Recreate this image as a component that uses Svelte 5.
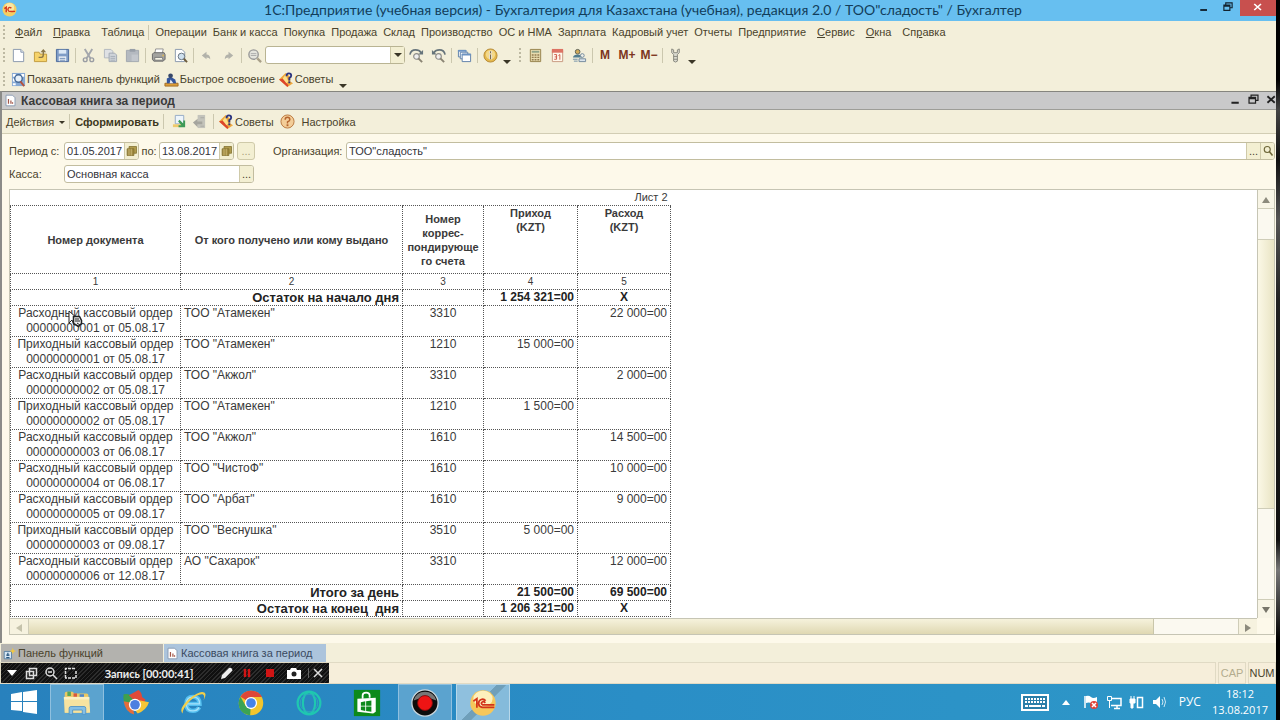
<script>
  const menu = [
    { key: 'Ф', rest: 'айл', wide: true },
    { key: 'П', rest: 'равка', wide: true },
    { rest: 'Таблица', wide: true, sep: true },
    { rest: 'Операции' },
    { rest: 'Банк и касса' },
    { rest: 'Покупка' },
    { rest: 'Продажа' },
    { rest: 'Склад' },
    { rest: 'Производство' },
    { rest: 'ОС и НМА' },
    { rest: 'Зарплата' },
    { rest: 'Кадровый учет' },
    { rest: 'Отчеты' },
    { rest: 'Предприятие', wide: true },
    { key: 'С', rest: 'ервис', wide: true },
    { key: 'О', rest: 'кна', wide: true },
    { pre: 'Сп', key: 'р', rest: 'авка' }
  ];

  const editTools = ['new', 'open', 'save', '|', 'cut', 'copy', 'paste', '|', 'print', 'preview', '|', 'undo', 'redo', '|', 'find'];
  const viewTools = ['next', 'prev', '|', 'windows', '|', 'info'];
  const calcTools = ['calc', 'calendar', 'users', '|', 'M', 'M+', 'M−', '|', 'wrench'];

  const rows = [
    ['Расходный', '00000000001 от 05.08.17', 'ТОО "Атамекен"', '3310', '', '22 000=00'],
    ['Приходный', '00000000001 от 05.08.17', 'ТОО "Атамекен"', '1210', '15 000=00', ''],
    ['Расходный', '00000000002 от 05.08.17', 'ТОО "Акжол"', '3310', '', '2 000=00'],
    ['Приходный', '00000000002 от 05.08.17', 'ТОО "Атамекен"', '1210', '1 500=00', ''],
    ['Расходный', '00000000003 от 06.08.17', 'ТОО "Акжол"', '1610', '', '14 500=00'],
    ['Расходный', '00000000004 от 06.08.17', 'ТОО "ЧистоФ"', '1610', '', '10 000=00'],
    ['Расходный', '00000000005 от 09.08.17', 'ТОО "Арбат"', '1610', '', '9 000=00'],
    ['Приходный', '00000000003 от 09.08.17', 'ТОО "Веснушка"', '3510', '5 000=00', ''],
    ['Расходный', '00000000006 от 12.08.17', 'АО "Сахарок"', '3310', '', '12 000=00']
  ];

  const apps = [
    { id: 'explorer', label: 'Проводник', active: true },
    { id: 'pinwheel', label: 'Браузер' },
    { id: 'ie', label: 'Internet Explorer' },
    { id: 'chrome', label: 'Chrome' },
    { id: 'opera', label: 'Opera' },
    { id: 'store', label: 'Магазин' },
    { id: 'record', label: 'Запись', active: true },
    { id: 'onec', label: '1С:Предприятие', active: true, front: true }
  ];

  let dateFrom = $state('01.05.2017');
  let dateTo = $state('13.08.2017');
  let organization = $state('ТОО"сладость"');
  let cashbox = $state('Основная касса');
  let query = $state('');
</script>

{#snippet icon(name)}
  <svg class="icon" viewBox="0 0 16 16" aria-hidden="true">
    {#if name === 'new'}
      <path d="M2.5 1.5h8l3 3v10h-11z" fill="#fff" stroke="#8796ac" />
      <path d="M10.500 1.500v3h3" fill="#dfe6ef" stroke="#8796ac" />
    {:else if name === 'open'}
      <path d="M1.500 14.500v-10h5l1 2h7v8z" fill="#f6d36a" stroke="#c09a3c" />
      <path d="M6 10h3q2 0 2-3V4" fill="none" stroke="#8a7748" stroke-width="1.500" />
      <path d="M8 4.500 11 1l3 3.500z" fill="#8a7748" />
    {:else if name === 'save'}
      <path d="M1.500 1.500h13v13h-13z" fill="#7f9cc6" stroke="#4a6a9c" />
      <path d="M4 2h8v4H4z" fill="#dce8f6" />
      <path d="M4 9h8v5H4z" fill="#f3f6fa" />
      <path d="M5 11h6M5 13h6" stroke="#6484b0" />
    {:else if name === 'cut'}
      <path d="M4 1l6 10M12 1L6 11" stroke="#a4a7ac" stroke-width="2" />
      <circle cx="4.500" cy="12.500" r="2" fill="none" stroke="#9a9da3" stroke-width="1.500" />
      <circle cx="11.500" cy="12.500" r="2" fill="none" stroke="#9a9da3" stroke-width="1.500" />
    {:else if name === 'copy'}
      <path d="M1.500 1.500h7l2 2v7h-9z" fill="#dfe1e4" stroke="#b0b6be" />
      <path d="M6.500 5.500h6l2 2v7h-8z" fill="#cfd3d9" stroke="#a0a8b2" />
      <path d="M8 9h5M8 11h5M8 13h5" stroke="#a5adb8" />
    {:else if name === 'paste'}
      <path d="M1.500 2.500h13v12h-13z" fill="#b4b9c0" stroke="#a0a6ae" />
      <path d="M5 1h6v3H5z" fill="#989fa8" />
      <path d="M7 7h7v7H7z" fill="#c3c7cd" />
    {:else if name === 'print'}
      <path d="M5 1h8l-1 5H4z" fill="#fff" stroke="#8f8f8f" />
      <path d="M1.500 6.500 3 5h11l1 2v5l-2 2H3l-1.500-2z" fill="#a3a3a0" stroke="#666" />
      <path d="M4 10h8l1 3H4z" fill="#f6f4e6" stroke="#777" />
      <circle cx="13" cy="8" r="1" fill="#d9b455" />
    {:else if name === 'preview'}
      <path d="M2.500 1.500h7l3 3v10h-10z" fill="#fff" stroke="#8796ac" />
      <circle cx="9" cy="9" r="3.500" fill="#cfe0ee" stroke="#66727f" />
      <path d="M11.500 11.500 15 15" stroke="#6b5a3c" stroke-width="2" />
    {:else if name === 'undo'}
      <path d="M3 8l5-4v3q4 0 4 5-1-2-4-2v2z" fill="#b2b2aa" />
    {:else if name === 'redo'}
      <path d="M13 8L8 4v3q-4 0-4 5 1-2 4-2v2z" fill="#b2b2aa" />
    {:else if name === 'find'}
      <circle cx="7" cy="7" r="5" fill="#e4e4dd" stroke="#999" stroke-width="1.500" />
      <path d="M4 6h6M4 8h6" stroke="#aaa" />
      <path d="M11 11l4 4" stroke="#a9a089" stroke-width="2.500" />
    {:else if name === 'next' || name === 'prev'}
      <g transform={name === 'prev' ? 'matrix(-1 0 0 1 16 0)' : undefined}>
        <path d="M1 7q1-5 6-5 4 0 6 3" fill="none" stroke="#66747b" stroke-width="1.800" />
        <path d="M15 2v5h-5z" fill="#66747b" />
      </g>
      <circle cx="8" cy="9" r="3" fill="#eee" stroke="#8c8c88" stroke-width="1.200" />
      <path d="M10 11l4 4" stroke="#8a8474" stroke-width="2" />
    {:else if name === 'windows'}
      <path d="M1.500 2.500h8v7h-8z" fill="#fff" stroke="#5b7ea8" />
      <path d="M3.500 4.500h8v7h-8z" fill="#fff" stroke="#5b7ea8" />
      <path d="M5.500 6.500h9v8h-9z" fill="#fff" stroke="#5b7ea8" />
      <path d="M1 2h9v2H1zM5 6h10v2H5z" fill="#6c93c2" />
    {:else if name === 'info'}
      <circle cx="8" cy="8" r="7" fill="#e5b94d" stroke="#b58a35" />
      <circle cx="8" cy="7" r="5" fill="#f3d98c" />
      <path d="M8 3.500v2M8 7v5" stroke="#fff" stroke-width="3" />
      <path d="M8 3.500v2M8 7v5" stroke="#7c6a4a" stroke-width="1.500" />
    {:else if name === 'calc'}
      <path d="M2.500 1.500h11v13h-11z" fill="#e8dcae" stroke="#94804a" />
      <path d="M4 3h8v2H4z" fill="#8fa387" />
      <path d="M4 7.500h8M4 10h8M4 12.500h8" stroke="#927c50" stroke-width="1.500" stroke-dasharray="2 1" />
    {:else if name === 'calendar'}
      <path d="M2.500 2.500h11v12h-11z" fill="#fff7ea" stroke="#c6977f" />
      <path d="M2 1h12v4H2z" fill="#dd7263" />
      <path d="M4.500 7h2.500v2.500H5M7 9v3H4.500M9 8l1.500-1v5.500" fill="none" stroke="#cc5846" />
    {:else if name === 'users'}
      <circle cx="6" cy="4" r="2.500" fill="#d0aa58" stroke="#5a5f55" />
      <path d="M1 10q1-3 5-3t5 3z" fill="#4f7c8f" />
      <circle cx="11" cy="8" r="2" fill="#efefe8" stroke="#71889b" />
      <path d="M7.500 14.500v-3h7v3z" fill="#dbe4ec" stroke="#71889b" />
      <path d="M1 12h5M2 14h4" stroke="#6f8fa8" />
    {:else if name === 'wrench'}
      <path d="M4 1v4l2 2v7q2 2 4 0V7l2-2V1l-2 1v3H6V2z" fill="#dcdcd2" stroke="#85857c" />
      <path d="M6 9h4M6 12h4" stroke="#85857c" />
    {:else if name === 'panel'}
      <path d="M1 1h14v14H1z" fill="#86a9d4" />
      <path d="M2 2h3v3H2zM2 7h3v3H2zM2 12h3v2H2zM11 2h3v3h-3z" fill="#fff" />
      <circle cx="8" cy="7" r="4" fill="#e7f0f8" stroke="#466a98" stroke-width="1.500" />
      <path d="M10 10l4 5" stroke="#b6523c" stroke-width="2" />
    {:else if name === 'learn'}
      <path d="M1 12h14v3H1z" fill="#dd9d36" stroke="#a26d22" />
      <path d="M3 12V7l4-2 5 3 1 4z" fill="#34559c" />
      <circle cx="7" cy="4" r="2.500" fill="#374769" />
      <path d="M7 8l3 4H6z" fill="#e8ecf3" />
    {:else if name === 'tips'}
      <path d="M0 8l7-7 5 4v5l3 2-6 4z" fill="#f0a83c" />
      <path d="M0 8l4-1 6 7-1 2z" fill="#dc452c" />
      <path d="M4 7l3-4 3 7-2 2z" fill="#fbe08a" />
      <path d="M8 4.500Q8 1.500 10.500 1.500T13 4q0 1.500-2 2.500v2.500" fill="none" stroke="#2d357f" stroke-width="2" />
      <path d="M10 10h2v2h-2z" fill="#2d357f" />
    {:else if name === 'sheet'}
      <path d="M2.500 1.500h8l3 3v10h-11z" fill="#fff" stroke="#7f93ad" />
      <path d="M5.500 12V6M8.500 12V8M10.500 12v-2" stroke="#a4584a" stroke-width="1.500" />
    {:else if name === 'load'}
      <path d="M3.500 1.500h9v9h-9z" fill="#eef5fb" stroke="#93aac4" />
      <path d="M1 11h9v3H1z" fill="#efca6b" />
      <path d="M8 6l4 4V7h2v7H7v-2h3L6.500 8z" fill="#3d9a56" />
    {:else if name === 'unload'}
      <path d="M6 1h8v14H6z" fill="#c3c3bb" />
      <path d="M1 9l5-4v3h5v3H6v3z" fill="#a5a59e" />
      <path d="M9 4h4M9 13h4" stroke="#a9a9a2" />
    {:else if name === 'help'}
      <circle cx="8" cy="8" r="7" fill="#f3cd98" stroke="#b9763d" />
      <path d="M5.500 6q0-2.500 2.500-2.500T10.500 6Q10.500 7 8 8.500V10" fill="none" stroke="#b5652f" stroke-width="1.500" />
      <path d="M7 11h2v2H7z" fill="#b5652f" />
    {:else if name === 'onec'}
      <circle cx="8" cy="8" r="7.500" fill="#f5cf63" />
      <circle cx="8" cy="6" r="5" fill="#fae7a4" />
      <path d="M2.500 7 4.500 5.500V11M10 6.500Q8 5 6.800 6.500T7 9.500Q8 10.500 14 10" fill="none" stroke="#d5361c" stroke-width="1.500" />
    {:else if name === 'book'}
      <path d="M4 2h10v9H4z" fill="#b09b4d" stroke="#7f6d2c" />
      <path d="M1.500 5h9v9h-9z" fill="#a08a40" stroke="#7f6d2c" />
      <path d="M4 5v9M7 5v9" stroke="#d3c283" />
    {:else if name === 'lens'}
      <circle cx="7" cy="6" r="4" fill="none" stroke="#6d6638" stroke-width="1.500" />
      <path d="M10 9l4 5" stroke="#6d6638" stroke-width="2" />
    {:else if name === 'funcs'}
      <path d="M1.500 5.500h9v9h-9z" fill="#d6e6f3" stroke="#4b789e" />
      <path d="M6 7v4M4 13h4M4 10h4" stroke="#28567f" stroke-width="1.500" />
      <path d="M12 1l1 3 3 1-3 1-1 3-1-3-3-1 3-1z" fill="#f3c83f" />
    {:else if name === 'restore'}
      <path d="M5 5V2.500h8.500V9H11M2.500 5.500h8v7h-8zM2.500 7h8" fill="none" stroke="currentColor" stroke-width="1.500" />
    {:else if name === 'min'}
      <path d="M3 12h9" stroke="currentColor" stroke-width="2.500" />
    {:else if name === 'x'}
      <path d="M3 4l9 8M12 4l-9 8" stroke="currentColor" stroke-width="2.200" />
    {/if}
  </svg>
{/snippet}

{#snippet tools(list)}
  {#each list as name}
    {#if name === '|'}
      <span class="sep"></span>
    {:else if name[0] === 'M'}
      <button class="tool memory">{name}</button>
    {:else}
      <button class="tool" aria-label={name}>{@render icon(name)}</button>
    {/if}
  {/each}
{/snippet}

{#snippet app(id)}
  <svg class="app-icon" viewBox="0 0 32 32" aria-hidden="true">
    {#if id === 'explorer'}
      <path d="M2 5q0-2 2-2h7l2 2h14q2 0 2 2v20H2z" fill="#e9c764" />
      <path d="M5 3h4v5H5z" fill="#57a65a" />
      <path d="M12 5h4v4h-4z" fill="#d9573f" />
      <path d="M19 6h5v4h-5z" fill="#4f86c9" />
      <path d="M1 9h29l1 18H2z" fill="#f6e3a0" />
      <path d="M1 9h29v3H1z" fill="#fbf0c4" />
      <path d="M7 29v-7q0-2 2-2h15q2 0 2 2v7h-4v-5H11v5z" fill="#83bfe6" stroke="#4f94c6" />
    {:else if id === 'pinwheel'}
      <path d="M3 6q8-2 12 6L9 21Q1 16 3 6z" fill="#3fa04d" />
      <path d="M9 7 20 1q4 3 4 8l4 3-2 5-10-3z" fill="#e04a38" />
      <path d="M22 13l10 2q-3 9-13 13l-5-7z" fill="#f4c637" />
      <path d="M3 14l10 2 2 13Q5 27 3 14z" fill="#e46d3b" />
      <circle cx="16" cy="18" r="7" fill="#fff" />
      <circle cx="16" cy="18" r="5.500" fill="#4d7fe0" />
    {:else if id === 'ie'}
      <path d="M8 17h15.500q0-8-7.500-8t-7.500 8 7.500 8q5 0 7-4" fill="none" stroke="#54c0f0" stroke-width="5" />
      <path d="M8 17h15.500q0-8-7.500-8t-7.500 8 7.500 8q5 0 7-4" fill="none" stroke="#a9e2fa" stroke-width="1.500" />
      <path d="M4 28Q-1 22 12 11 24 1 29 4q3 2-1 9 2-6-1-7-5-1-14 7-9 9-9 15z" fill="#f2cf4a" />
    {:else if id === 'chrome'}
      <circle cx="16" cy="16" r="14" fill="#f2c52e" />
      <path d="M16 16 4 8.800Q8 2 16 2q9 0 12.500 7H16z" fill="#dd4637" />
      <path d="M4 8.800 10 19.500 16 16l-1 14Q2 28 2 16q0-4 2-7.200z" fill="#3ba354" />
      <circle cx="16" cy="16" r="7" fill="#fff" />
      <circle cx="16" cy="16" r="5.500" fill="#4583e8" />
    {:else if id === 'opera'}
      <circle cx="16" cy="16" r="13" fill="none" stroke="#1fc7b0" stroke-width="2.500" />
      <ellipse cx="16" cy="16" rx="7" ry="12.500" fill="none" stroke="#1fc7b0" stroke-width="2.500" />
      <circle cx="16" cy="16" r="10" fill="none" stroke="#2fa9bd" />
    {:else if id === 'store'}
      <path d="M1 1h30v30H1z" fill="#0d8a1c" />
      <path d="M5 11l21-1v16l-3 2-18-2z" fill="#fff" />
      <path d="M11 11V7q0-3 4-3t4 3v3" fill="none" stroke="#fff" stroke-width="2" />
      <path d="M9 15l5-1v5H9zM15 14l6-1v6h-6zM9 20h5v5l-5-1zM15 20h6v6l-6-1z" fill="#0d8a1c" />
    {:else if id === 'record'}
      <circle cx="16" cy="16" r="15" fill="#0c0c0c" stroke="#c8d5dc" stroke-width="1.500" />
      <path d="M3 13q3-10 13-10t13 10Q16 7 3 13z" fill="#777" />
      <circle cx="16" cy="16" r="8.500" fill="#ee1414" stroke="#7c0a0a" />
    {:else if id === 'onec'}
      <circle cx="16" cy="16" r="14.500" fill="#f6c75a" />
      <ellipse cx="16" cy="11" rx="11" ry="9" fill="#fdf0bd" />
      <path d="M5 14l4-3v10.500M19 13.500Q17 11 14 12t-3 4.500 4 4.500h14M18.500 16Q17 13.500 15 15t.5 3H29" fill="none" stroke="#d3341a" stroke-width="2" />
    {/if}
  </svg>
{/snippet}

<div class="screen">
  <header class="titlebar">
    <span class="app-logo">{@render icon('onec')}</span>
    <h1>1С:Предприятие (учебная версия) - Бухгалтерия для Казахстана (учебная), редакция 2.0 / ТОО"сладость" / Бухгалтер</h1>
    <div class="window-buttons">
      <button aria-label="Свернуть">{@render icon('min')}</button>
      <button aria-label="Восстановить">{@render icon('restore')}</button>
      <button class="close" aria-label="Закрыть">{@render icon('x')}</button>
    </div>
  </header>

  <div class="bars">
    <nav class="menubar">
      <span class="grip"></span>
      {#each menu as item}
        <button class:wide={item.wide}>{item.pre ?? ''}{#if item.key}<u>{item.key}</u>{/if}{item.rest}</button>
        {#if item.sep}<span class="sep"></span>{/if}
      {/each}
    </nav>

    <div class="toolbar">
      <span class="grip"></span>
      {@render tools(editTools)}
      <div class="combo">
        <input type="text" aria-label="Поиск" bind:value={query} />
        <button aria-label="Список"><span class="caret"></span></button>
      </div>
      {@render tools(viewTools)}
      <span class="more"><span class="caret"></span></span>
      <span class="grip second"></span>
      {@render tools(calcTools)}
      <span class="more"><span class="caret"></span></span>
    </div>

    <div class="toolbar">
      <span class="grip"></span>
      <button class="labelled">{@render icon('panel')}Показать панель функций</button>
      <button class="labelled">{@render icon('learn')}Быстрое освоение</button>
      <button class="labelled">{@render icon('tips')}Советы</button>
      <span class="more"><span class="caret"></span></span>
    </div>
  </div>

  <main class="document">
    <div class="doc-title">
      {@render icon('sheet')}
      <h2>Кассовая книга за период</h2>
      <div class="doc-buttons">
        <button aria-label="Свернуть">{@render icon('min')}</button>
        <button aria-label="Восстановить">{@render icon('restore')}</button>
        <button aria-label="Закрыть">{@render icon('x')}</button>
      </div>
    </div>

    <div class="doc-toolbar">
      <button class="text">Действия <span class="caret small"></span></button>
      <span class="sep"></span>
      <button class="text strong">Сформировать</button>
      <span class="sep"></span>
      {@render tools(['load', 'unload', '|'])}
      <button class="labelled">{@render icon('tips')}Советы</button>
      <button class="tool" aria-label="Справка">{@render icon('help')}</button>
      <button class="text settings">Настройка</button>
    </div>

    <div class="body">
      <form class="filters">
        <div class="line">
          <label class="first" for="from">Период с:</label>
          <div class="field date">
            <input id="from" type="text" bind:value={dateFrom} />
            <button type="button" aria-label="Календарь">{@render icon('book')}</button>
          </div>
          <label class="to" for="to">по:</label>
          <div class="field date">
            <input id="to" type="text" bind:value={dateTo} />
            <button type="button" aria-label="Календарь">{@render icon('book')}</button>
          </div>
          <button class="pick" type="button">...</button>
          <label class="org" for="org">Организация:</label>
          <div class="field grow">
            <input id="org" type="text" bind:value={organization} />
            <button type="button">...</button>
            <button type="button" aria-label="Открыть">{@render icon('lens')}</button>
          </div>
        </div>
        <div class="line">
          <label class="first" for="cash">Касса:</label>
          <div class="field cash">
            <input id="cash" type="text" bind:value={cashbox} />
            <button type="button">...</button>
          </div>
        </div>
      </form>

      <div class="viewer">
        <div class="sheet">
          <table>
            <colgroup>
              <col class="c-doc" /><col class="c-who" /><col class="c-acc" /><col class="c-in" /><col class="c-out" />
            </colgroup>
            <thead>
              <tr class="page"><td colspan="5">Лист 2</td></tr>
              <tr class="heads">
                <th>Номер документа</th>
                <th>От кого получено или кому выдано</th>
                <th>Номер<br />коррес-<br />пондирующе<br />го счета</th>
                <th class="top">Приход<br />(KZT)</th>
                <th class="top">Расход<br />(KZT)</th>
              </tr>
              <tr class="numbers"><td>1</td><td>2</td><td>3</td><td>4</td><td>5</td></tr>
            </thead>
            <tbody>
              <tr class="total"><td class="caption" colspan="2">Остаток на начало дня</td><td></td><td>1 254 321=00</td><td class="mid">X</td></tr>
              {#each rows as [kind, doc, who, account, income, outcome]}
                <tr class="entry">
                  <td class="doc">{kind} кассовый ордер<br />{doc}</td>
                  <td>{who}</td>
                  <td class="mid">{account}</td>
                  <td class="num">{income}</td>
                  <td class="num">{outcome}</td>
                </tr>
              {/each}
              <tr class="total"><td class="caption" colspan="2">Итого за день</td><td></td><td>21 500=00</td><td>69 500=00</td></tr>
              <tr class="total"><td class="caption" colspan="2">Остаток на конец&nbsp; дня</td><td></td><td>1 206 321=00</td><td class="mid">X</td></tr>
            </tbody>
          </table>
          <svg class="pointer" viewBox="0 0 16 18" aria-hidden="true">
            <path d="M2 1v12l3-3 2 5 2-1-2-5h4z" fill="#fff" stroke="#222" />
            <path d="M6.500 6.500h6l2 4v3l-3 3-5-3z" fill="#eee" stroke="#222" stroke-width="1.500" />
            <path d="M8 9h4M8 11h5M10 13l3 2" stroke="#222" />
          </svg>
        </div>
        <div class="vscroll">
          <button aria-label="Вверх"><span class="arrow up"></span></button>
          <div class="space"></div>
          <div class="thumb"></div>
          <div class="space rest"></div>
          <button aria-label="Вниз"><span class="arrow down"></span></button>
        </div>
        <div class="hscroll">
          <button aria-label="Влево"><span class="arrow left"></span></button>
          <div class="thumb"></div>
          <div class="space"></div>
          <button aria-label="Вправо"><span class="arrow right"></span></button>
        </div>
      </div>
    </div>
  </main>

  <div class="tabs">
    <button>{@render icon('funcs')}Панель функций</button>
    <button class="current">{@render icon('sheet')}Кассовая книга за период</button>
  </div>

  <footer class="status">
    <span class="hint"></span>
    <span class="key off">CAP</span>
    <span class="key">NUM</span>

    <div class="recorder">
      <svg class="rec-tools" viewBox="0 0 70 14" aria-hidden="true">
        <path d="M0 4h10L5 10z" fill="#fff" />
        <path d="M22.500 2.500h7v7h-7zM19.500 5.500h7v7h-7z" fill="none" stroke="#ddd" stroke-width="1.500" />
        <circle cx="43" cy="6" r="4" fill="none" stroke="#ddd" stroke-width="1.500" />
        <path d="M46 9l4 4M41 6h4" stroke="#ddd" stroke-width="1.500" />
        <path d="M58.500 12V2.500H69M69 5v7H58" fill="none" stroke="#ddd" stroke-width="1.500" stroke-dasharray="3 1" />
      </svg>
      <span class="time">Запись [00:00:41]</span>
      <svg class="rec-buttons" viewBox="0 0 104 14" aria-hidden="true">
        <path d="M0 13l1-4 7-7q2-1 3 1t0 2l-7 7z" fill="#eee" />
        <path d="M24 3v8M28 3v8" stroke="#d01414" stroke-width="2.500" />
        <path d="M45 3h8v8h-8z" fill="#d01414" />
        <path d="M66 4h3l1-2h5l1 2h4v9H66z" fill="#fff" />
        <circle cx="73" cy="8" r="2.500" fill="#222" />
        <path d="M87.500 2v10" stroke="#666" />
        <path d="M93 3l8 8M101 3l-8 8" stroke="#ddd" stroke-width="1.500" />
      </svg>
    </div>
  </footer>

  <div class="taskbar">
    <button class="start" aria-label="Пуск">
      <svg viewBox="0 0 26 24" aria-hidden="true">
        <path d="M0 4l11-2v9H0zM12 2l14-2v11H12zM0 12h11v9L0 20zM12 12h14v12l-14-2z" fill="#fff" />
      </svg>
    </button>
    {#each apps as item}
      <button class="task" class:active={item.active} class:front={item.front} aria-label={item.label}>{@render app(item.id)}</button>
    {/each}
    <div class="tray">
      <svg class="keyboard" viewBox="0 0 28 17" aria-hidden="true">
        <path d="M1 1h26v15H1z" fill="#2a7ea8" stroke="#fff" stroke-width="2" />
        <path d="M4 5h20M4 8h20" stroke="#fff" stroke-width="2" stroke-dasharray="2 1" />
        <path d="M4 12h3M8 12h12M21 12h3" stroke="#fff" stroke-width="2" />
      </svg>
      <span class="arrow tray-up"></span>
      <svg class="tray-icons" viewBox="0 0 84 16" aria-hidden="true">
        <path d="M2 2v12" stroke="#fff" stroke-width="1.500" />
        <path d="M3 2q3-1 5 1t6 0v6q-4 1-6 0t-5 0z" fill="#fff" />
        <circle cx="11" cy="11" r="4" fill="#e04238" />
        <path d="M9 9l4 4M13 9l-4 4" stroke="#fff" stroke-width="1.500" />
        <path d="M29 4.500h9v7H28M31 14.500h6M34 12v2" fill="none" stroke="#fff" stroke-width="1.500" />
        <path d="M24.500 2.500h4v4h-4zM26.500 6v8" fill="none" stroke="#fff" />
        <path d="M47 5h5v4h-2v5h-2V9h-1zM48 2v3M51 2v3" fill="#fff" stroke="#fff" />
        <path d="M54.500 3.500h5v10h-5z" fill="none" stroke="#fff" stroke-width="1.500" />
        <path d="M70 6h3l4-4v12l-4-4h-3z" fill="#fff" />
        <path d="M79 5q2 3 0 6M81 3q3 5 0 10" fill="none" stroke="#cde8f5" />
      </svg>
      <span class="lang">РУС</span>
      <div class="clock"><span>18:12</span><span>13.08.2017</span></div>
    </div>
  </div>
</div>

<style>
  :global(body) {
    background: #000;
  }

  .screen {
    display: flex;
    flex-direction: column;
    min-height: 100vh;
    padding-right: 4px;
    overflow: hidden;
    background: linear-gradient(#000 80px, #444 110px, #111 160px, #555 220px, #222 300px, #111 540px, #777 570px, #000 640px);
    box-sizing: border-box;
    font: 11px "Liberation Sans", Arial, sans-serif;
    color: #4a432c;
  }

  button {
    border: 0;
    padding: 0;
    background: none;
    font: inherit;
    color: inherit;
    white-space: nowrap;
  }

  input {
    border: 0;
    padding: 0 2px;
    min-width: 0;
    flex: 1;
    background: none;
    font: inherit;
    color: #33333a;
    outline: 0;
  }

  .icon {
    width: 15px;
    height: 15px;
    flex: none;
  }

  .titlebar {
    display: flex;
    height: 21px;
    background: #67bff0;
    color: #123d5a;
  }

  .titlebar h1 {
    flex: 1;
    margin: 0;
    font: 14px/20px Lato, "Open Sans", sans-serif;
    text-align: center;
    white-space: nowrap;
  }

  .app-logo {
    width: 94px;
    padding: 2px;
    box-sizing: border-box;
  }

  .window-buttons {
    display: flex;
    height: 16px;
    color: #12222e;
  }

  .window-buttons button {
    width: 24px;
  }

  .window-buttons .icon {
    width: 12px;
    height: 12px;
  }

  .window-buttons .close {
    width: 36px;
    background: #c8504e;
    color: #fff;
  }

  .bars {
    background: #f3efda;
  }

  .menubar,
  .toolbar,
  .doc-toolbar {
    display: flex;
    align-items: center;
    padding-left: 3px;
  }

  .menubar {
    height: 22px;
  }

  .toolbar {
    height: 24px;
  }

  .menubar button {
    margin-right: 6px;
  }

  .menubar button.wide {
    margin-right: 11px;
  }

  .menubar .grip {
    margin-right: 10px;
  }

  .menubar .sep {
    margin: 0 6px 0 -7px;
  }

  .grip {
    width: 0;
    height: 14px;
    margin-right: 2px;
    border-left: 2px dotted #bdb9a2;
  }

  .grip.second {
    margin-left: 6px;
    margin-right: 3px;
  }

  .sep {
    width: 1px;
    height: 15px;
    margin: 0 1px 0 2px;
    background: #cbc7ae;
  }

  .tool {
    display: flex;
    justify-content: center;
    align-items: center;
    width: 22px;
    height: 20px;
  }

  .memory {
    font-size: 12px;
    font-weight: bold;
    color: #7c3520;
  }

  .combo {
    display: flex;
    width: 138px;
    height: 16px;
    border: 1px solid #b9b493;
    border-radius: 3px;
    background: #fff;
  }

  .combo button,
  .field button,
  .pick {
    display: flex;
    justify-content: center;
    align-items: center;
    width: 14px;
    border-left: 1px solid #cfcaa9;
    background: #f3efd2;
  }

  .caret {
    display: inline-block;
    border: 4px solid transparent;
    border-top-color: #3a3626;
    border-bottom: 0;
  }

  .caret.small {
    border-width: 3px;
    border-bottom: 0;
    margin: 0 0 2px 2px;
  }

  .more {
    display: flex;
    align-self: flex-end;
    width: 12px;
    padding: 0 0 3px 2px;
    box-sizing: border-box;
  }

  .labelled {
    display: flex;
    align-items: center;
    gap: 1px;
    margin-right: 4px;
  }

  .toolbar .labelled:first-of-type {
    margin-left: 4px;
  }

  .document {
    flex: 1;
    display: flex;
    flex-direction: column;
    border-left: 2px solid #8b8b88;
    background: #fdf9ea;
  }

  .doc-title {
    display: flex;
    align-items: center;
    height: 17px;
    padding-left: 2px;
    border-top: 1px solid #85857f;
    border-bottom: 1px solid #9d9d98;
    background: #c9c9ca;
    color: #3a3a3a;
    overflow: hidden;
  }

  .doc-title h2 {
    flex: 1;
    margin: 0 0 0 4px;
    font-size: 12px;
  }

  .doc-title .icon {
    width: 13px;
    height: 13px;
  }

  .doc-buttons {
    display: flex;
    margin-right: -4px;
    color: #222;
  }

  .doc-buttons button {
    width: 18px;
  }

  .doc-toolbar {
    height: 23px;
    padding-left: 4px;
    border-bottom: 1px solid #d2cdb4;
    background: #f3efda;
  }

  .doc-toolbar .sep {
    margin: 0 5px 0 4px;
  }

  .doc-toolbar .tool {
    width: 20px;
  }

  .strong {
    font-weight: bold;
    color: #3c3721;
  }

  .settings {
    margin-left: 4px;
  }

  .body {
    flex: 1;
    display: flex;
    flex-direction: column;
    padding: 8px 1px 8px 7px;
  }

  .filters {
    display: flex;
    flex-direction: column;
    gap: 5px;
    margin-bottom: 6px;
  }

  .line {
    display: flex;
    align-items: center;
    height: 18px;
  }

  .first {
    width: 55px;
  }

  .to {
    width: 20px;
    text-align: center;
  }

  .org {
    width: 73px;
    margin-left: 18px;
  }

  .field {
    display: flex;
    height: 16px;
    border: 1px solid #c2bd9f;
    border-radius: 3px;
    background: #fff;
    overflow: hidden;
  }

  .field .icon {
    width: 12px;
    height: 12px;
  }

  .date {
    width: 73px;
  }

  .cash {
    width: 188px;
  }

  .grow {
    flex: 1;
  }

  .pick {
    width: 18px;
    height: 18px;
    margin-left: 3px;
    border: 1px solid #cfcaa9;
    border-radius: 3px;
    color: #a9a27a;
  }

  .viewer {
    flex: 1;
    display: grid;
    grid-template-columns: 1fr 17px;
    grid-template-rows: 1fr 16px;
    border: 1px solid #c6c5b4;
  }

  .sheet {
    position: relative;
    background: #fff;
    overflow: hidden;
    color: #3a3a3a;
  }

  table {
    width: 661px;
    table-layout: fixed;
    border-collapse: collapse;
    font-size: 12px;
    line-height: 15px;
  }

  .c-doc {
    width: 170px;
  }

  .c-who {
    width: 222px;
  }

  .c-acc {
    width: 81px;
  }

  .c-in {
    width: 94px;
  }

  .c-out {
    width: 93px;
  }

  td,
  th {
    padding: 0 3px;
    border: 1px dotted #555;
    vertical-align: top;
  }

  .page td {
    height: 15px;
    border-width: 0 0 1px;
    font-size: 11px;
    text-align: right;
  }

  .heads th {
    height: 67px;
    font-size: 11px;
    line-height: 14px;
    padding: 0;
    vertical-align: middle;
  }

  .heads .top {
    vertical-align: top;
  }

  .numbers td {
    height: 15px;
    font-size: 10px;
    text-align: center;
  }

  .entry td {
    height: 30px;
  }

  .total td {
    height: 15px;
    font-weight: bold;
    text-align: right;
    color: #222;
  }

  .total .caption {
    font-size: 13px;
  }

  .num {
    text-align: right;
  }

  .doc,
  .mid,
  .total .mid {
    text-align: center;
  }

  .pointer {
    position: absolute;
    left: 57px;
    top: 120px;
    width: 16px;
    height: 18px;
  }

  .vscroll {
    display: flex;
    flex-direction: column;
    grid-row: span 2;
    border-left: 1px solid #c6c5b4;
    margin-bottom: 16px;
    background: #fbf9f0;
  }

  .vscroll button {
    height: 19px;
    border-bottom: 1px solid #cfcdb8;
    background: #f8f5e6;
  }

  .vscroll button:last-child {
    border-top: 1px solid #cfcdb8;
    border-bottom: 0;
  }

  .vscroll .space {
    flex: 30;
  }

  .vscroll .rest {
    flex: 90;
  }

  .vscroll .thumb {
    flex: 270;
    border: solid #cfcdb8;
    border-width: 1px 0;
    background: linear-gradient(90deg, #fbf8e6, #e9e4c4);
  }

  .hscroll {
    display: flex;
    border-top: 1px solid #c6c5b4;
    background: #fbf9f0;
  }

  .hscroll button {
    width: 19px;
    border-right: 1px solid #cfcdb8;
    background: #f6f2df;
  }

  .hscroll button:last-child {
    border-left: 1px solid #cfcdb8;
    border-right: 0;
  }

  .hscroll .thumb {
    flex: 1125;
    border-right: 1px solid #c9c6aa;
    background: linear-gradient(#f6f2dc, #dfd8b2);
  }

  .hscroll .space {
    flex: 84;
  }

  .arrow {
    display: inline-block;
    border: 4px solid transparent;
    vertical-align: middle;
  }

  .up {
    border-bottom: 6px solid #8c8a7c;
    border-top: 0;
  }

  .down {
    border-top: 6px solid #77756a;
    border-bottom: 0;
  }

  .left {
    border-right: 6px solid #c5c2ab;
    border-left: 0;
  }

  .right {
    border-left: 6px solid #8c8a7c;
    border-right: 0;
  }

  .tabs {
    display: flex;
    gap: 1px;
    height: 18px;
    padding: 1px 0 0 1px;
    background: #f3efda;
  }

  .tabs button {
    display: flex;
    align-items: center;
    gap: 2px;
    width: 162px;
    padding-left: 2px;
    background: #b3b2ae;
  }

  .tabs .icon {
    width: 13px;
    height: 13px;
  }

  .tabs .current {
    background: #acc4dc;
    color: #3a4a60;
  }

  .status {
    position: relative;
    display: flex;
    height: 22px;
    background: #f6eeda;
    gap: 2px;
    overflow: hidden;
  }

  .hint {
    flex: 1;
    border: 1px solid #e0dac4;
  }

  .key {
    width: 26px;
    border: 1px solid #e0dac4;
    line-height: 20px;
    text-align: center;
  }

  .off {
    color: #b3ac8e;
  }

  /* the recorder strip floats over the left end of the status bar */
  .recorder {
    position: absolute;
    left: 1px;
    top: 1px;
    bottom: 1px;
    display: flex;
    align-items: center;
    width: 328px;
    padding: 0 4px 0 6px;
    box-sizing: border-box;
    background: repeating-linear-gradient(135deg, #101010 0 2px, #2c2c2c 2px 3px);
    color: #eee;
  }

  .rec-tools {
    width: 70px;
    height: 14px;
  }

  .rec-buttons {
    width: 104px;
    height: 14px;
  }

  .time {
    flex: 1;
    font: bold 11px Lato, "Open Sans", sans-serif;
    text-align: center;
  }

  .taskbar {
    display: flex;
    align-items: stretch;
    gap: 4px;
    height: 36px;
    background: linear-gradient(90deg, #2881bd, #2a8ec6 50%, #2e98c8);
    color: #fff;
  }

  .start {
    width: 46px;
  }

  .start svg {
    display: block;
    width: 26px;
    height: 24px;
    margin-left: 11px;
  }

  .task {
    width: 54px;
    display: flex;
    justify-content: center;
    align-items: center;
    border: 1px solid transparent;
    border-bottom: 0;
  }

  .active {
    border-color: #8fc0df;
    background: #5ba3cf;
  }

  .front {
    background: linear-gradient(135deg, #8fc0de 45%, #6f9fba 46% 56%, #85bbdb 57%);
    border-color: #b8d8ea;
  }

  .app-icon {
    width: 28px;
    height: 28px;
  }

  .tray {
    display: flex;
    align-items: center;
    margin-left: auto;
    padding-right: 8px;
    font: 12px/16px "Open Sans", sans-serif;
  }

  .keyboard {
    width: 28px;
    height: 17px;
  }

  .tray-up {
    margin: 0 13px;
    border-bottom: 5px solid #fff;
    border-top: 0;
  }

  .tray-icons {
    width: 84px;
    height: 16px;
  }

  .lang {
    margin: 0 11px 0 12px;
  }

  .clock {
    display: flex;
    flex-direction: column;
    align-items: center;
    font-size: 11px;
  }
</style>
